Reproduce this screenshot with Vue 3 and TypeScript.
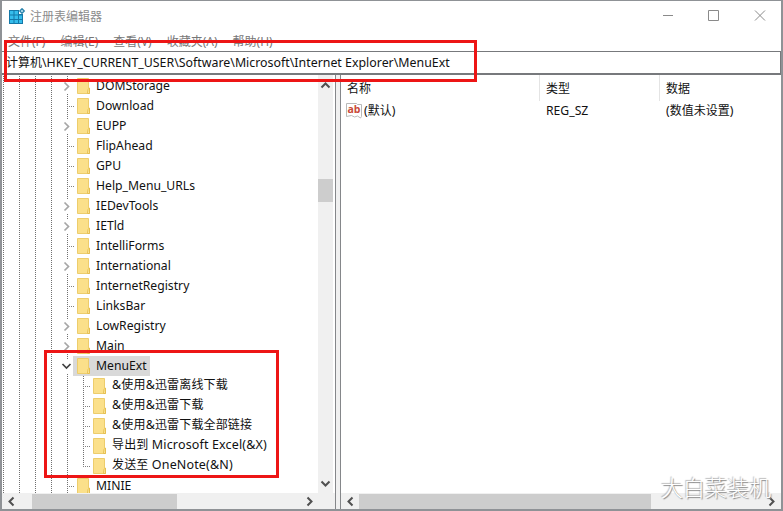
<template>
  <div class="desktop">
    <div class="window">
      <!-- title bar -->
      <header class="title-bar">
        <svg class="app-icon" width="17" height="17" viewBox="0 0 17 17">
          <path d="M0 2h10v4h4v10H0z" fill="#1478a8" />
          <path d="M1 3h3.500v3.500H1zM5.500 3H9v3.500H5.500zM1 7.500h3.500V11H1zM5.500 7.500H9V11H5.500zM10 7.500h3V11h-3zM1 12h3.500v3H1zM5.500 12H9v3H5.500zM10 12h3v3h-3z" fill="#35bdec" />
          <path d="M13 .8l2.200 2.200L13 5.200 10.800 3z" fill="#d5f1fb" stroke="#2b84ad" stroke-width="1.400" />
        </svg>
        <span class="title">注册表编辑器</span>
        <div class="controls">
          <svg width="12" height="12" viewBox="0 0 12 12"><path d="M1 5.500h10" /></svg>
          <svg width="12" height="12" viewBox="0 0 12 12"><path d="M.5.5h10v10H.5z" /></svg>
          <svg width="12" height="12" viewBox="0 0 12 12"><path d="M1 .5l10 10M11 .5l-10 10" /></svg>
        </div>
      </header>

      <nav class="menu-bar">
        <span v-for="item in menus" :key="item">{{ item }}</span>
      </nav>

      <div class="address"><i>计算机</i>{{ address }}</div>

      <main class="panes">
        <section class="tree-pane">
          <div class="tree-body">
            <ul class="tree">
              <li v-for="node in nodes" :key="node.label" class="row" :class="{ child: node.child }">
                <span v-for="n in 4" :key="n" class="guide"></span>
                <span class="guide last-guide">
                  <svg v-if="node.state === 'closed'" class="arrow" width="9" height="13" viewBox="0 0 9 13">
                    <path d="M2.500 2.500l4 4-4 4" stroke="#a6a6a6" />
                  </svg>
                  <svg v-else-if="node.state === 'open'" class="arrow open" width="11" height="13" viewBox="0 0 11 13">
                    <path d="M1.500 4l4 4 4-4" stroke="#404040" />
                  </svg>
                  <span v-else-if="!node.child" class="branch"></span>
                </span>
                <span v-if="node.child" class="guide last-guide" :class="{ end: node.last }"><span class="branch"></span></span>
                <span class="entry" :class="{ selected: node.state === 'open' }">
                  <svg class="folder" width="14" height="16" viewBox="0 0 14 16">
                    <path d="M.5.5h11v9.500h1v5.500H.5z" fill="#fbe08a" stroke="#edcd6c" />
                    <path d="M10.500 15.500l.5-4 1.500-1.500v5.500z" fill="#fde9a0" stroke="#e6bf50" />
                  </svg>
                  <span class="label"><template v-for="(part, i) in split(node.label)" :key="i"><i v-if="part.cjk">{{ part.text }}</i><template v-else>{{ part.text }}</template></template></span>
                </span>
              </li>
            </ul>
            <div class="scroll-v">
              <svg width="11" height="9" viewBox="0 0 11 9"><path d="M1.500 6.500l4-4 4 4" /></svg>
              <div class="thumb"></div>
              <svg class="down" width="11" height="9" viewBox="0 0 11 9"><path d="M1.500 2.500l4 4 4-4" /></svg>
            </div>
          </div>
          <div class="scroll-h">
            <svg width="9" height="11" viewBox="0 0 9 11"><path d="M6.500 1.500l-4 4 4 4" /></svg>
            <div class="thumb"></div>
            <svg class="right" width="9" height="11" viewBox="0 0 9 11"><path d="M2.500 1.500l4 4-4 4" /></svg>
          </div>
        </section>

        <div class="splitter"></div>

        <section class="value-pane">
          <div class="grid head">
            <span><i>名称</i></span>
            <span><i>类型</i></span>
            <span><i>数据</i></span>
          </div>
          <div class="grid value">
            <span class="name">
              <svg width="17" height="16" viewBox="0 0 17 16">
                <path d="M.5.500h10l1 1h4v12l-1 1.500-3-2-3 1-3-1.500-5 1z" fill="#fff" stroke="#b9b9b9" />
                <text x="1.500" y="10">ab</text>
              </svg>
              <span>(<i>默认</i>)</span>
            </span>
            <span>REG_SZ</span>
            <span>(<i>数值未设置</i>)</span>
          </div>
          <div class="space"></div>
          <div class="scroll-h">
            <svg width="9" height="11" viewBox="0 0 9 11"><path d="M6.500 1.500l-4 4 4 4" /></svg>
            <div class="thumb wide"></div>
            <svg class="right" width="9" height="11" viewBox="0 0 9 11"><path d="M2.500 1.500l4 4-4 4" /></svg>
          </div>
        </section>
      </main>
    </div>

    <!-- highlight frames over the window -->
    <div class="mark mark-address"></div>
    <div class="mark mark-keys"></div>
    <div class="watermark">大白菜装机</div>
  </div>
</template>

<script setup lang="ts">
interface TreeNode {
  label: string;
  state?: 'open' | 'closed';
  child?: boolean;
  last?: boolean;
}

const menus = ['文件(F)', '编辑(E)', '查看(V)', '收藏夹(A)', '帮助(H)'];
const address = '\\HKEY_CURRENT_USER\\Software\\Microsoft\\Internet Explorer\\MenuExt';

const nodes: TreeNode[] = [
  { label: 'DOMStorage', state: 'closed' },
  { label: 'Download' },
  { label: 'EUPP', state: 'closed' },
  { label: 'FlipAhead' },
  { label: 'GPU' },
  { label: 'Help_Menu_URLs' },
  { label: 'IEDevTools', state: 'closed' },
  { label: 'IETld', state: 'closed' },
  { label: 'IntelliForms' },
  { label: 'International', state: 'closed' },
  { label: 'InternetRegistry' },
  { label: 'LinksBar' },
  { label: 'LowRegistry', state: 'closed' },
  { label: 'Main', state: 'closed' },
  { label: 'MenuExt', state: 'open' },
  { label: '&使用&迅雷离线下载', child: true },
  { label: '&使用&迅雷下载', child: true },
  { label: '&使用&迅雷下载全部链接', child: true },
  { label: '导出到 Microsoft Excel(&X)', child: true },
  { label: '发送至 OneNote(&N)', child: true, last: true },
  { label: 'MINIE' },
];

// Chinese runs are set slightly smaller than Latin ones
const split = (label: string) =>
  (label.match(/[\u4e00-\u9fff]+|[^\u4e00-\u9fff]+/g) ?? []).map((text) => ({
    text,
    cjk: /[\u4e00-\u9fff]/.test(text),
  }));
</script>

<style>
body {
  overflow: hidden;
}
</style>

<style scoped>
.desktop {
  position: relative;
  box-sizing: border-box;
  width: 783px;
  height: 511px;
  padding: 1px 2px 2px;
  background: #8f9296;
  font: 12.2px/20px "Noto Sans", "Noto Sans CJK SC", sans-serif;
  color: #111;
  overflow: hidden;
}

i {
  font: 12px/1 "Noto Sans CJK SC", sans-serif;
}

.window {
  display: flex;
  flex-direction: column;
  width: 779px;
  height: 508px;
  background: #fff;
}

.title-bar {
  display: flex;
  align-items: center;
  height: 30px;
  padding-left: 7px;
}

.app-icon {
  margin-right: 4px;
}

.title {
  font: 12px/20px "Noto Sans CJK SC", sans-serif;
  color: #8c8c8c;
}

.controls {
  display: flex;
  gap: 34px;
  margin-left: auto;
  margin-right: 15px;
}

.controls svg {
  fill: none;
  stroke: #8a8a8a;
}

.menu-bar {
  display: flex;
  gap: 15px;
  height: 20px;
  padding-left: 6px;
  font: 12px/21px "Noto Sans", "Noto Sans CJK SC", sans-serif;
  color: #777;
}

.address {
  height: 21px;
  padding-left: 4px;
  border: solid #77797c;
  border-width: 1px 1px 2px 0;
  font-size: 12.38px;
  line-height: 22px;
  white-space: nowrap;
}

.panes {
  display: flex;
  flex: 1;
  min-height: 0;
}

.tree-pane {
  display: flex;
  flex-direction: column;
  width: 333px;
}

.tree-body {
  display: flex;
  flex: 1;
  min-height: 0;
}

.tree {
  flex: 1;
  min-width: 0;
  margin: 0;
  padding: 1px 0 0 1px;
  overflow: hidden;
  list-style: none;
}

.row {
  display: flex;
  height: 20px;
}

.guide {
  display: flex;
  align-items: center;
  flex: none;
  width: 16px;
  height: 20px;
  background: repeating-linear-gradient(#707070 0 1px, transparent 1px 2px) 0 0 / 1px 100% no-repeat;
}

.last-guide:not(:has(+ .guide)) {
  width: 6px;
}

.guide.end {
  background-size: 1px 11px;
}

.branch {
  flex: none;
  width: 7px;
  height: 1px;
  background: repeating-linear-gradient(90deg, #808080 0 1px, transparent 1px 2px);
}

.arrow {
  flex: none;
  margin-left: -5px;
  background: #fff;
}

.arrow.open {
  margin-left: -6px;
}

.arrow path {
  fill: none;
  stroke-width: 1.7;
}

.entry {
  display: flex;
  align-items: center;
  flex: none;
  padding-left: 4px;
  padding-right: 3px;
}

.entry.selected {
  background: #d9d9d9;
}

.folder {
  margin-right: 5px;
}

.label {
  white-space: pre;
}

.child .label {
  letter-spacing: 0.15px;
  font-size: 12.5px;
  line-height: 18px;
  padding-bottom: 2px;
}

.scroll-v {
  display: flex;
  flex-direction: column;
  align-items: center;
  width: 15px;
  margin-right: 2px;
  padding: 6px 0 5px;
  background: #f0f0f0;
}

.scroll-v svg,
.scroll-h svg {
  flex: none;
  fill: none;
}

.scroll-v path,
.scroll-h path {
  stroke: #505050;
  stroke-width: 2;
}

.scroll-v .thumb {
  width: 15px;
  height: 23px;
  margin-top: 89px;
  background: #cdcdcd;
}

.scroll-v .down {
  margin-top: auto;
}

.scroll-h {
  display: flex;
  align-items: center;
  flex: none;
  height: 16px;
  padding: 0 5px;
  background: #f0f0f0;
}

.tree-pane .scroll-h {
  padding-right: 21px;
}

.scroll-h .thumb {
  width: 145px;
  height: 15px;
  margin-left: 16px;
  background: #cdcdcd;
}

.scroll-h .thumb.wide {
  width: 292px;
  margin-left: 4px;
}

.scroll-h .right {
  margin-left: auto;
}

.splitter {
  width: 4px;
  border: solid #85878a;
  border-width: 0 1px;
  background: #f0f0f0;
}

.value-pane {
  display: flex;
  flex-direction: column;
  flex: 1;
  min-width: 0;
}

.grid {
  display: grid;
  grid-template-columns: 199px 120px 1fr;
}

.grid > span {
  box-sizing: border-box;
  padding-left: 6px;
}

.head {
  height: 26px;
  line-height: 27px;
}

.head > span:not(:last-child) {
  height: 26px;
  border-right: 1px solid #e4e4e4;
}

.value {
  line-height: 20px;
}

.value .name {
  display: flex;
  align-items: center;
  padding-left: 5px;
}

.name svg {
  margin-right: 1px;
}

.name text {
  font: bold 10.500px "Open Sans", sans-serif;
  fill: #c94a38;
}

.space {
  flex: 1;
}

.mark {
  position: absolute;
  box-sizing: border-box;
  border: 3px solid #ed1515;
}

.mark-address {
  left: 4px;
  top: 40px;
  width: 473px;
  height: 42px;
}

.mark-keys {
  left: 44px;
  top: 350px;
  width: 235px;
  height: 128px;
}

.watermark {
  position: absolute;
  left: 661px;
  top: 471px;
  font: 300 22px/30px "Noto Sans CJK SC", sans-serif;
  color: #fff;
  text-shadow: 1px 1px 1px #888, -1px -1px 1px #bbb;
}
</style>
